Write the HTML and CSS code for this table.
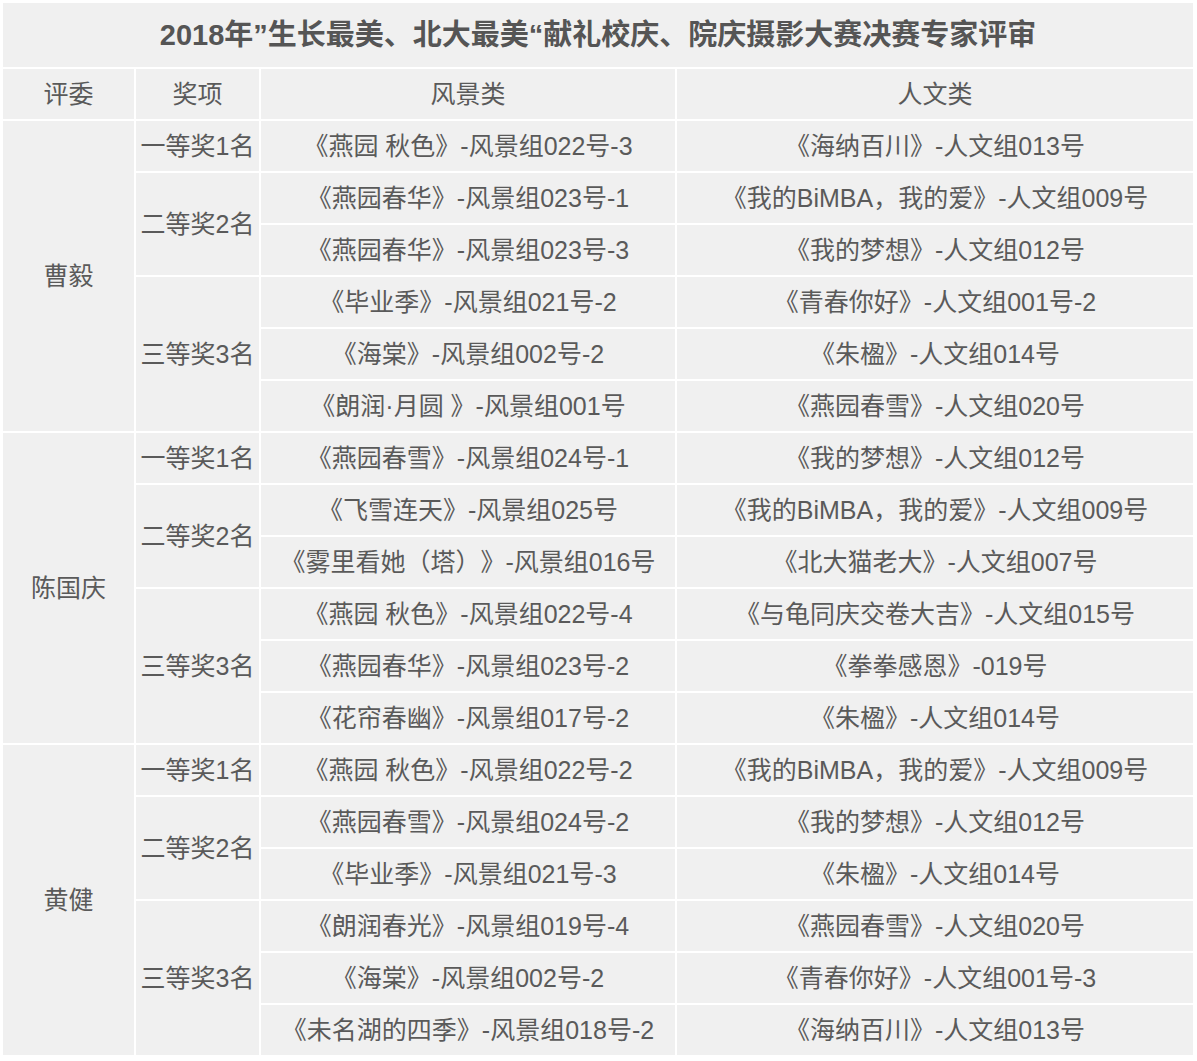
FILE: index.html
```html
<!DOCTYPE html>
<html lang="zh-CN">
<head>
<meta charset="utf-8">
<title>2018年摄影大赛决赛专家评审</title>
<link rel="stylesheet" href="styles.css">
</head>
<body>
<table class="results">
  <colgroup>
    <col class="c-judge">
    <col class="c-award">
    <col class="c-scene">
    <col class="c-human">
  </colgroup>
  <tr class="title-row"><td colspan="4" class="title">2018年”生长最美、北大最美“献礼校庆、院庆摄影大赛决赛专家评审</td></tr>
  <tr class="row"><td>评委</td><td>奖项</td><td>风景类</td><td>人文类</td></tr>

  <tr class="row"><td rowspan="6">曹毅</td><td>一等奖1名</td><td>《燕园 秋色》-风景组022号-3</td><td>《海纳百川》-人文组013号</td></tr>
  <tr class="row"><td rowspan="2">二等奖2名</td><td>《燕园春华》-风景组023号-1</td><td>《我的BiMBA，我的爱》-人文组009号</td></tr>
  <tr class="row"><td>《燕园春华》-风景组023号-3</td><td>《我的梦想》-人文组012号</td></tr>
  <tr class="row"><td rowspan="3">三等奖3名</td><td>《毕业季》-风景组021号-2</td><td>《青春你好》-人文组001号-2</td></tr>
  <tr class="row"><td>《海棠》-风景组002号-2</td><td>《朱楹》-人文组014号</td></tr>
  <tr class="row"><td>《朗润·月圆 》-风景组001号</td><td>《燕园春雪》-人文组020号</td></tr>

  <tr class="row"><td rowspan="6">陈国庆</td><td>一等奖1名</td><td>《燕园春雪》-风景组024号-1</td><td>《我的梦想》-人文组012号</td></tr>
  <tr class="row"><td rowspan="2">二等奖2名</td><td>《飞雪连天》-风景组025号</td><td>《我的BiMBA，我的爱》-人文组009号</td></tr>
  <tr class="row"><td>《雾里看她（塔）》-风景组016号</td><td>《北大猫老大》-人文组007号</td></tr>
  <tr class="row"><td rowspan="3">三等奖3名</td><td>《燕园 秋色》-风景组022号-4</td><td>《与龟同庆交卷大吉》-人文组015号</td></tr>
  <tr class="row"><td>《燕园春华》-风景组023号-2</td><td>《拳拳感恩》-019号</td></tr>
  <tr class="row"><td>《花帘春幽》-风景组017号-2</td><td>《朱楹》-人文组014号</td></tr>

  <tr class="row"><td rowspan="6">黄健</td><td>一等奖1名</td><td>《燕园 秋色》-风景组022号-2</td><td>《我的BiMBA，我的爱》-人文组009号</td></tr>
  <tr class="row"><td rowspan="2">二等奖2名</td><td>《燕园春雪》-风景组024号-2</td><td>《我的梦想》-人文组012号</td></tr>
  <tr class="row"><td>《毕业季》-风景组021号-3</td><td>《朱楹》-人文组014号</td></tr>
  <tr class="row"><td rowspan="3">三等奖3名</td><td>《朗润春光》-风景组019号-4</td><td>《燕园春雪》-人文组020号</td></tr>
  <tr class="row"><td>《海棠》-风景组002号-2</td><td>《青春你好》-人文组001号-3</td></tr>
  <tr class="row"><td>《未名湖的四季》-风景组018号-2</td><td>《海纳百川》-人文组013号</td></tr>
</table>
</body>
</html>
```

FILE: styles.css
```css
html, body {
  margin: 0;
  padding: 0;
  background: #ffffff;
}
body {
  padding: 1px 0 0 1px;
  font-family: "Liberation Sans", "Noto Sans CJK SC", sans-serif;
  color: #5a5a5a;
}
.results {
  table-layout: fixed;
  border-collapse: separate;
  border-spacing: 2px;
  width: 1194px;
}
.c-judge { width: 131px; }
.c-award { width: 123px; }
.c-scene { width: 414px; }
.c-human { width: 516px; }
.results td {
  background: #f0f0f0;
  text-align: center;
  vertical-align: middle;
  padding: 0 0 1px 0;
  font-size: 25px;
  line-height: 30px;
  white-space: nowrap;
  text-spacing-trim: space-all;
}
.results .title-row td {
  height: 63px;
  font-size: 29px;
  font-weight: bold;
  color: #555555;
}
.results .row > td {
  height: 49px;
}
```
